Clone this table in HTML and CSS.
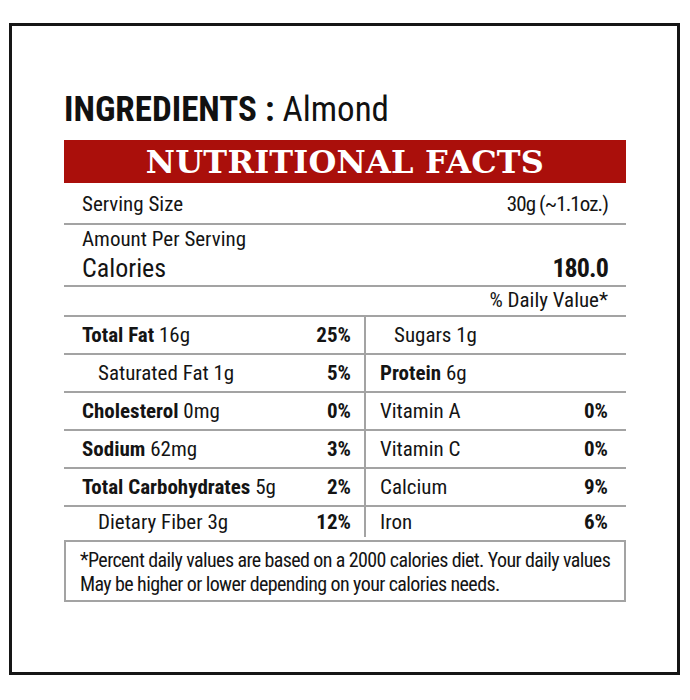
FILE: index.html
```html
<!DOCTYPE html>
<html lang="en">
<head>
<meta charset="utf-8">
<title>Nutritional Facts - Almond</title>
<link rel="stylesheet" href="styles.css">
</head>
<body>
<div class="frame">
  <h1 class="ingredients"><b>INGREDIENTS :</b> Almond</h1>
  <h2 class="banner">NUTRITIONAL FACTS</h2>
  <div class="row serving"><span>Serving Size</span><span class="num">30g (~1.1oz.)</span></div>
  <div class="row amount">
    <div class="amount-label">Amount Per Serving</div>
    <div class="calories"><span>Calories</span><b class="num">180.0</b></div>
  </div>
  <div class="row daily">% Daily Value*</div>
  <div class="grid">
    <div class="cell left"><span><b>Total Fat</b> 16g</span><b>25%</b></div>
    <div class="cell right indent"><span>Sugars 1g</span></div>
    <div class="cell left indent"><span>Saturated Fat 1g</span><b>5%</b></div>
    <div class="cell right"><span><b>Protein</b> 6g</span></div>
    <div class="cell left"><span><b>Cholesterol</b> 0mg</span><b>0%</b></div>
    <div class="cell right"><span>Vitamin A</span><b>0%</b></div>
    <div class="cell left"><span><b>Sodium</b> 62mg</span><b>3%</b></div>
    <div class="cell right"><span>Vitamin C</span><b>0%</b></div>
    <div class="cell left"><span><b>Total Carbohydrates</b> 5g</span><b>2%</b></div>
    <div class="cell right"><span>Calcium</span><b>9%</b></div>
    <div class="cell left indent last"><span>Dietary Fiber 3g</span><b>12%</b></div>
    <div class="cell right last"><span>Iron</span><b>6%</b></div>
  </div>
  <p class="note">*Percent daily values are based on a 2000 calories diet. Your daily values<br>May be higher or lower depending on your calories needs.</p>
</div>
</body>
</html>
```
FILE: styles.css
```css
* { box-sizing: border-box; }
html, body { margin: 0; padding: 0; background: #fff; }
body {
  font-family: "Roboto Condensed", "Liberation Sans Narrow", sans-serif;
  color: #141414;
}
b { font-weight: 700; }

.frame {
  width: 671px;
  height: 652px;
  margin: 23px 0 0 9px;
  border: 3px solid #161616;
  padding: 63px 51px 0 52px;
}

.ingredients {
  margin: 0;
  font-size: 35px;
  line-height: 41px;
  font-weight: 400;
  color: #111;
}
.ingredients b { font-weight: 700; }

.banner {
  margin: 10px 0 0;
  height: 43px;
  padding-top: 1px;
  background: #aa0f0b;
  color: #fff;
  font-family: "DejaVu Serif", "Liberation Serif", serif;
  font-weight: 700;
  font-size: 32px;
  line-height: 42px;
  text-align: center;
  letter-spacing: 0.2px;
}

.row {
  border-bottom: 2px solid #a3a3a3;
  padding: 0 18px;
  font-size: 21px;
}
.num { letter-spacing: -0.9px; }
.serving {
  display: flex;
  justify-content: space-between;
  height: 42px;
  padding-top: 2px;
  line-height: 38px;
}
.amount {
  height: 62px;
  padding-top: 2px;
}
.amount-label { line-height: 24px; }
.calories {
  display: flex;
  justify-content: space-between;
  margin-top: 2px;
  font-size: 26px;
  line-height: 30px;
}
.daily {
  height: 30px;
  line-height: 26px;
  text-align: right;
}

.grid {
  display: grid;
  grid-template-columns: 302px 1fr;
  font-size: 21px;
}
.cell {
  display: flex;
  justify-content: space-between;
  height: 38px;
  line-height: 36px;
  border-bottom: 2px solid #a3a3a3;
}
.cell.left {
  border-right: 2px solid #a3a3a3;
  padding: 0 13px 0 18px;
}
.cell.right {
  padding: 0 18px 0 14px;
}
.cell.left.indent { padding-left: 34px; }
.cell.right.indent { padding-left: 28px; }
.cell.last {
  height: 30px;
  line-height: 30px;
  border-bottom: 0;
}

.note {
  margin: 3px 0 0;
  border: 2px solid #a3a3a3;
  height: 62px;
  padding: 6px 10px 0 14px;
  font-size: 20px;
  line-height: 24px;
  letter-spacing: -0.6px;
  white-space: nowrap;
}
```
